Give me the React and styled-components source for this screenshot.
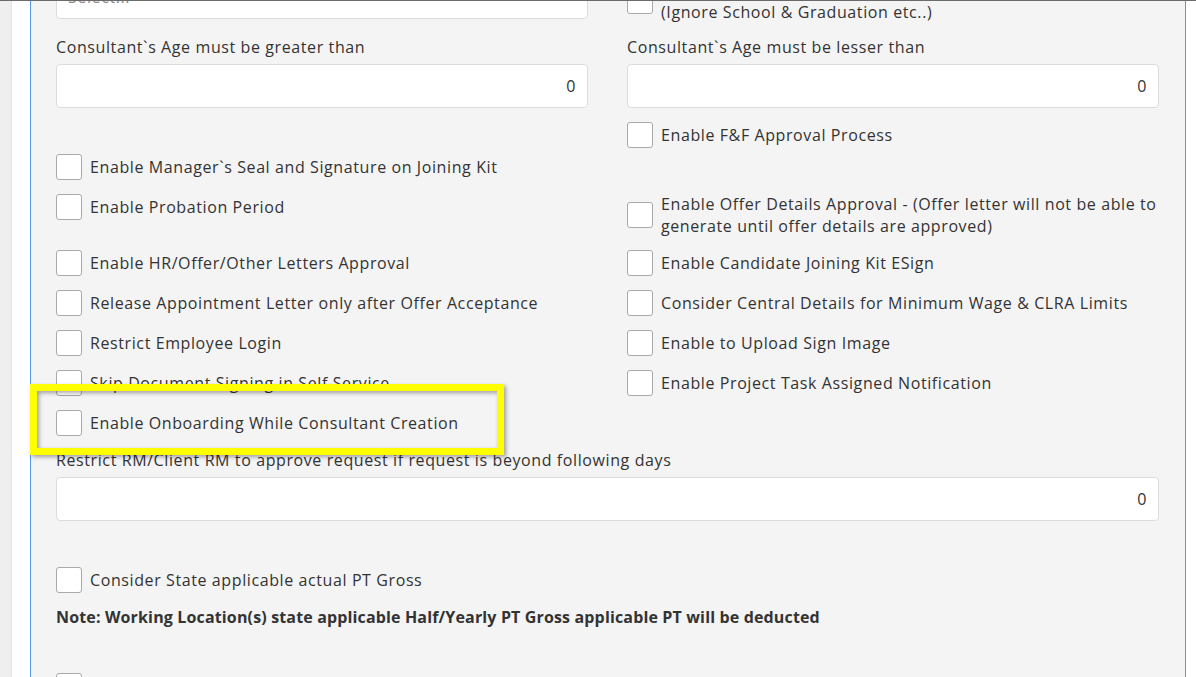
import React from "react";
import styled, { createGlobalStyle } from "styled-components";

const GlobalStyle = createGlobalStyle`
    html, body {
        margin: 0;
        padding: 0;
        background: #efefef;
    }
    body {
        font-family: "Open Sans", "Noto Sans", sans-serif;
        color: #333;
    }
`;

const Page = styled.div`
    height: 677px;
    box-sizing: border-box;
    border-top: 1px solid #6b6b6b;
    overflow: hidden;
    display: flex;
    position: relative;
`;

const Gutter = styled.div`
    flex: 0 0 11px;
    background: #efefef;
`;

const Sheet = styled.div`
    flex: 1;
    display: flex;
    background: #fff;
    border-left: 1px solid #e4e4e4;
    padding: 0 10px 0 18px;
`;

const Content = styled.div`
    flex: 1;
    background: #f4f4f4;
    border-left: 1px solid #5596ea;
    border-right: 1px solid #5596ea;
    padding: 0 26px 0 25px;
    margin-top: -26px;
`;

const Columns = styled.div`
    display: grid;
    grid-template-columns: 1fr 1fr;
    column-gap: 39px;
    align-items: start;
`;

const Stack = styled.div`
    display: flex;
    flex-direction: column;
    gap: ${(props) => props.gap ?? 14}px;
`;

const Label = styled.div`
    font-size: 16px;
    letter-spacing: 0.6px;
    line-height: 22px;
    margin: ${(props) => props.top ?? 0}px 0 6px;
`;

const Input = styled.div`
    height: 44px;
    box-sizing: border-box;
    background: #fff;
    border: 1px solid #dcdcdc;
    border-radius: 4px;
    padding: 0 11px;
    display: flex;
    align-items: center;
    justify-content: ${(props) => (props.placeholder ? "flex-start" : "flex-end")};
    font-size: 16px;
    letter-spacing: 0.6px;
    color: ${(props) => (props.placeholder ? "#8a8a8a" : "#333")};
`;

const Check = styled.label`
    display: flex;
    align-items: center;
    gap: 8px;
    margin-top: ${(props) => props.top ?? 0}px;
    font-size: 16px;
    letter-spacing: 0.6px;
    line-height: 22px;
`;

const Box = styled.span`
    flex: 0 0 26px;
    height: 26px;
    box-sizing: border-box;
    background: #fff;
    border: 1px solid #a9a9a9;
    border-radius: 3px;
`;

const Note = styled.div`
    margin-top: 13px;
    font-size: 16px;
    font-weight: 700;
    letter-spacing: 0.15px;
    line-height: 22px;
`;

// annotation drawn over the form
const Highlight = styled.div`
    position: absolute;
    left: 30px;
    top: 383px;
    width: 474px;
    height: 71px;
    box-sizing: border-box;
    border: 7px solid #ffff00;
    box-shadow: 2px 2px 4px rgba(0, 0, 0, 0.35), inset 2px 2px 4px rgba(0, 0, 0, 0.35);
    pointer-events: none;
`;

function CheckItem({ children, top }) {
    return (
        <Check top={top}>
            <Box />
            <span>{children}</span>
        </Check>
    );
}

const leftChecks = [
    ["Enable Manager`s Seal and Signature on Joining Kit", 46],
    ["Enable Probation Period"],
    ["Enable HR/Offer/Other Letters Approval", 16],
    ["Release Appointment Letter only after Offer Acceptance"],
    ["Restrict Employee Login"],
    ["Skip Document Signing in Self Service"],
    ["Enable Onboarding While Consultant Creation"],
];

const rightChecks = [
    ["Enable F&F Approval Process", 14],
    ["Enable Offer Details Approval - (Offer letter will not be able to generate until offer details are approved)", 31],
    ["Enable Candidate Joining Kit ESign", -1],
    ["Consider Central Details for Minimum Wage & CLRA Limits"],
    ["Enable to Upload Sign Image"],
    ["Enable Project Task Assigned Notification"],
];

export default function App() {
    return (
        <>
            <GlobalStyle />
            <Page>
                <Gutter />
                <Sheet>
                    <Content>
                        <Columns>
                            <Input placeholder="true">Select...</Input>
                            <CheckItem top={4}>
                                Consider Highest Qualification only
                                <br />
                                (Ignore School &amp; Graduation etc..)
                            </CheckItem>
                        </Columns>
                        <Columns>
                            <div>
                                <Label top={13}>Consultant`s Age must be greater than</Label>
                                <Input>0</Input>
                            </div>
                            <div>
                                <Label top={13}>Consultant`s Age must be lesser than</Label>
                                <Input>0</Input>
                            </div>
                        </Columns>
                        <Columns>
                            <Stack>
                                {leftChecks.map(([text, top]) => (
                                    <CheckItem key={text} top={top}>{text}</CheckItem>
                                ))}
                            </Stack>
                            <Stack>
                                {rightChecks.map(([text, top]) => (
                                    <CheckItem key={text} top={top}>{text}</CheckItem>
                                ))}
                            </Stack>
                        </Columns>
                        <Label top={13}>Restrict RM/Client RM to approve request if request is beyond following days</Label>
                        <Input>0</Input>
                        <Stack gap={0}>
                            <CheckItem top={46}>Consider State applicable actual PT Gross</CheckItem>
                            <Note>Note: Working Location(s) state applicable Half/Yearly PT Gross applicable PT will be deducted</Note>
                            <CheckItem top={45}>Consider Professional Tax on Actual Gross</CheckItem>
                        </Stack>
                    </Content>
                </Sheet>
                <Highlight />
            </Page>
        </>
    );
}
